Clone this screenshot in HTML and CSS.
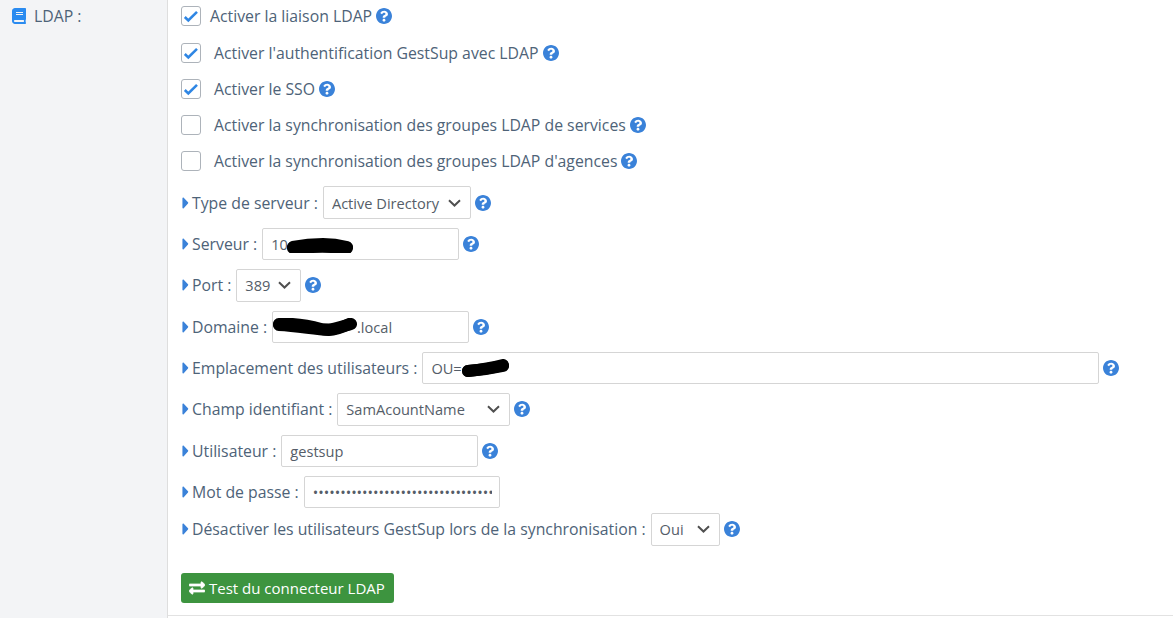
FILE: index.html
```html
<!DOCTYPE html>
<html lang="fr">
<head>
<meta charset="utf-8">
<title>LDAP</title>
<link rel="stylesheet" href="styles.css">
</head>
<body>
<svg class="defs" width="0" height="0" aria-hidden="true">
  <symbol id="help" viewBox="8 8 496 496"><path d="M504 256c0 136.997-111.043 248-248 248S8 392.997 8 256C8 119.083 119.043 8 256 8s248 111.083 248 248zM262.655 90c-54.497 0-89.255 22.957-116.549 63.758-3.536 5.286-2.353 12.415 2.715 16.258l34.699 26.31c5.205 3.947 12.621 3.008 16.665-2.122 17.864-22.658 30.113-35.797 57.303-35.797 20.429 0 45.698 13.148 45.698 32.958 0 14.976-12.363 22.667-32.534 33.976C247.128 238.528 216 254.941 216 296v4c0 6.627 5.373 12 12 12h56c6.627 0 12-5.373 12-12v-1.333c0-28.462 83.186-29.647 83.186-106.667 0-58.002-60.165-102-116.531-102zM256 338c-25.365 0-46 20.635-46 46 0 25.364 20.635 46 46 46s46-20.636 46-46c0-25.365-20.635-46-46-46z"/></symbol>
  <symbol id="caret" viewBox="0 0 8 14"><path d="M1 1.5v11c0 .8.9 1.2 1.5.6l5-5.5c.4-.4.4-1 0-1.400l-5-5.300C1.900.3 1 .7 1 1.500z"/></symbol>
</svg>
<div class="page">
  <aside class="side">
    <svg class="book" viewBox="0 0 448 512"><path d="M448 360V24c0-13.300-10.700-24-24-24H96C43 0 0 43 0 96v320c0 53 43 96 96 96h328c13.300 0 24-10.700 24-24v-16c0-7.500-3.500-14.300-8.900-18.700-4.200-15.400-4.200-59.300 0-74.700 5.400-4.300 8.900-11.100 8.900-18.600zM128 134c0-3.300 2.700-6 6-6h212c3.300 0 6 2.700 6 6v20c0 3.300-2.700 6-6 6H134c-3.300 0-6-2.700-6-6v-20zm0 64c0-3.300 2.700-6 6-6h212c3.300 0 6 2.700 6 6v20c0 3.300-2.700 6-6 6H134c-3.300 0-6-2.700-6-6v-20zm253.400 250H96c-17.700 0-32-14.300-32-32 0-17.600 14.400-32 32-32h285.400c-1.900 17.100-1.900 46.900 0 64z"/></svg>
    <span>LDAP :</span>
  </aside>
  <main class="main">
    <div class="checks">
      <label class="check first"><input type="checkbox" class="box" checked><span>Activer la liaison LDAP</span><svg class="help"><use href="#help"/></svg></label>
      <label class="check"><input type="checkbox" class="box" checked><span>Activer l'authentification GestSup avec LDAP</span><svg class="help"><use href="#help"/></svg></label>
      <label class="check"><input type="checkbox" class="box" checked><span>Activer le SSO</span><svg class="help"><use href="#help"/></svg></label>
      <label class="check"><input type="checkbox" class="box"><span>Activer la synchronisation des groupes LDAP de services</span><svg class="help"><use href="#help"/></svg></label>
      <label class="check"><input type="checkbox" class="box"><span>Activer la synchronisation des groupes LDAP d'agences</span><svg class="help"><use href="#help"/></svg></label>
    </div>
    <div class="fields">
      <div class="row">
        <svg class="caret"><use href="#caret"/></svg><span class="lbl">Type de serveur :</span>
        <select class="sel w-type"><option>Active Directory</option></select>
        <svg class="help"><use href="#help"/></svg>
      </div>
      <div class="row">
        <svg class="caret"><use href="#caret"/></svg><span class="lbl">Serveur :</span>
        <span class="field">
          <input class="txt w-std" type="text" value="10">
          <svg class="blot blot-server" viewBox="0 0 66 16"><path d="M6 10C16 8 26 7 36 7s16 1 24 3"/><path d="M6 11C20 10 40 9 60 11"/></svg>
        </span>
        <svg class="help"><use href="#help"/></svg>
      </div>
      <div class="row">
        <svg class="caret"><use href="#caret"/></svg><span class="lbl">Port :</span>
        <select class="sel w-port"><option>389</option></select>
        <svg class="help"><use href="#help"/></svg>
      </div>
      <div class="row">
        <svg class="caret"><use href="#caret"/></svg><span class="lbl">Domaine :</span>
        <span class="field">
          <input class="txt w-std" type="text" value="                    .local">
          <svg class="blot blot-domain" viewBox="0 0 84 18"><path d="M6 6C22 5 34 7 48 11c8 2 16-1 30-5"/><path d="M6 7C25 8 40 11 56 12c8 0 14-3 20-6"/></svg>
        </span>
        <svg class="help"><use href="#help"/></svg>
      </div>
      <div class="row">
        <svg class="caret"><use href="#caret"/></svg><span class="lbl">Emplacement des utilisateurs :</span>
        <span class="field">
          <input class="txt w-ou" type="text" value="OU=">
          <svg class="blot blot-ou" viewBox="0 0 47 18"><path d="M6 12C16 11 30 9 41 6"/><path d="M6 12C20 11 32 9 41 7"/></svg>
        </span>
        <svg class="help"><use href="#help"/></svg>
      </div>
      <div class="row">
        <svg class="caret"><use href="#caret"/></svg><span class="lbl">Champ identifiant :</span>
        <select class="sel w-champ"><option>SamAcountName</option></select>
        <svg class="help"><use href="#help"/></svg>
      </div>
      <div class="row">
        <svg class="caret"><use href="#caret"/></svg><span class="lbl">Utilisateur :</span>
        <input class="txt w-std" type="text" value="gestsup">
        <svg class="help"><use href="#help"/></svg>
      </div>
      <div class="row">
        <svg class="caret"><use href="#caret"/></svg><span class="lbl">Mot de passe :</span>
        <input class="txt w-pass" type="password" value="motdepasseldapgestsupmotdepasseldapgestsup">
      </div>
      <div class="row last">
        <svg class="caret"><use href="#caret"/></svg><span class="lbl">Désactiver les utilisateurs GestSup lors de la synchronisation :</span>
        <select class="sel w-oui"><option>Oui</option></select>
        <svg class="help"><use href="#help"/></svg>
      </div>
    </div>
    <button class="btn" type="button">
      <svg class="swap" viewBox="0 0 512 512"><path d="M0 168v-16c0-13.255 10.745-24 24-24h360V80c0-21.367 25.899-32.042 40.971-16.971l80 80c9.372 9.373 9.372 24.569 0 33.941l-80 80C409.956 271.982 384 261.456 384 240v-48H24c-13.255 0-24-10.745-24-24zm488 152H128v-48c0-21.314-25.862-32.080-40.971-16.971l-80 80c-9.372 9.373-9.372 24.569 0 33.941l80 80C102.057 463.997 128 453.437 128 432v-48h360c13.255 0 24-10.745 24-24v-16c0-13.255-10.745-24-24-24z"/></svg>
      <span>Test du connecteur LDAP</span>
    </button>
  </main>
</div>
</body>
</html>
```
FILE: styles.css
```css
* { box-sizing: border-box; }
html, body { margin: 0; height: 100%; overflow: hidden; }
body {
  font-family: "Open Sans", "Liberation Sans", sans-serif;
  font-size: 15.8px;
  color: #4e6378;
  background: #fff;
}
.defs { position: absolute; }
.page {
  display: flex;
  height: 616px;
  border-bottom: 1px solid #e2e2e2;
}
.side {
  width: 168px;
  flex: none;
  height: 618px;
  background: #f3f4f6;
  border-right: 1px solid #dedede;
  padding: 5px 0 0 12px;
  display: flex;
  align-items: flex-start;
  gap: 8px;
  line-height: 22px;
}
.book { width: 14px; height: 16px; margin-top: 3px; fill: #2a8bf0; flex: none; }
.main { flex: 1; padding: 6px 0 0 13px; }

.checks { display: flex; flex-direction: column; }
.check { display: flex; align-items: center; height: 36px; margin-top: -8px; margin-bottom: 8px; }
.check.first { margin-bottom: 9px; }
.check span { margin-left: 13px; }
.check.first span { margin-left: 9px; }
.box {
  appearance: none;
  width: 20px;
  height: 20px;
  margin: 0;
  background: #fff no-repeat center;
  border: 1px solid #adb3ba;
  border-radius: 3px;
}
.box:checked {
  background-image: url("data:image/svg+xml,%3Csvg xmlns='http://www.w3.org/2000/svg' width='18' height='18' viewBox='0 0 18 18'%3E%3Cpath d='M2.800 10l3.500 3.400L15 4.800' fill='none' stroke='%232f86e4' stroke-width='2.600'/%3E%3C/svg%3E");
}
.help { width: 16px; height: 16px; fill: #3a82d9; flex: none; margin-left: 4px; }

.fields { margin-top: -5px; }
.row { display: flex; align-items: center; height: 41.330px; }
.row.last { height: 33px; }
.caret { width: 8px; height: 12px; fill: #3a82d9; flex: none; }
.lbl { margin-left: 3px; margin-right: 5px; white-space: nowrap; }

.sel, .txt {
  font-family: inherit;
  font-size: 14.600px;
  color: #555d68;
  background-color: #fff;
  border: 1px solid #d5d5d5;
  border-radius: 2px;
  margin: 0;
  outline: none;
}
.sel {
  appearance: none;
  height: 33px;
  padding: 0 24px 0 8px;
  background-image: url("data:image/svg+xml,%3Csvg xmlns='http://www.w3.org/2000/svg' width='13' height='8' viewBox='0 0 13 8'%3E%3Cpath d='M1 1.200l5.500 5.300L12 1.200' fill='none' stroke='%23505050' stroke-width='2'/%3E%3C/svg%3E");
  background-repeat: no-repeat;
  background-position: right 9px center;
}
.txt { height: 32px; padding: 0 8px; display: block; }
.w-type { width: 148px; }
.w-port { width: 65px; }
.w-champ { width: 173px; }
.w-oui { width: 69px; }
.w-std { width: 197px; }
.w-ou { width: 677px; }
.w-pass { width: 196px; padding-right: 7px; }

.field { position: relative; display: block; }
.blot {
  position: absolute;
  fill: none;
  stroke: #000;
  stroke-width: 12;
  stroke-linecap: round;
  stroke-linejoin: round;
  pointer-events: none;
}
.blot-server { left: 25px; top: 9px; width: 66px; height: 16px; }
.blot-domain { left: 1px; top: 7px; width: 84px; height: 18px; }
.blot-ou { left: 40px; top: 7px; width: 47px; height: 18px; }

.btn {
  display: flex;
  align-items: center;
  gap: 4px;
  height: 30px;
  width: 213px;
  margin-top: 27px;
  padding: 0 0 0 8px;
  background: #3d943f;
  border: 0;
  border-radius: 3px;
  color: #fff;
  font-family: inherit;
  font-size: 15px;
}
.swap { width: 16px; height: 16px; fill: #fff; stroke: #fff; stroke-width: 24; flex: none; }
```
